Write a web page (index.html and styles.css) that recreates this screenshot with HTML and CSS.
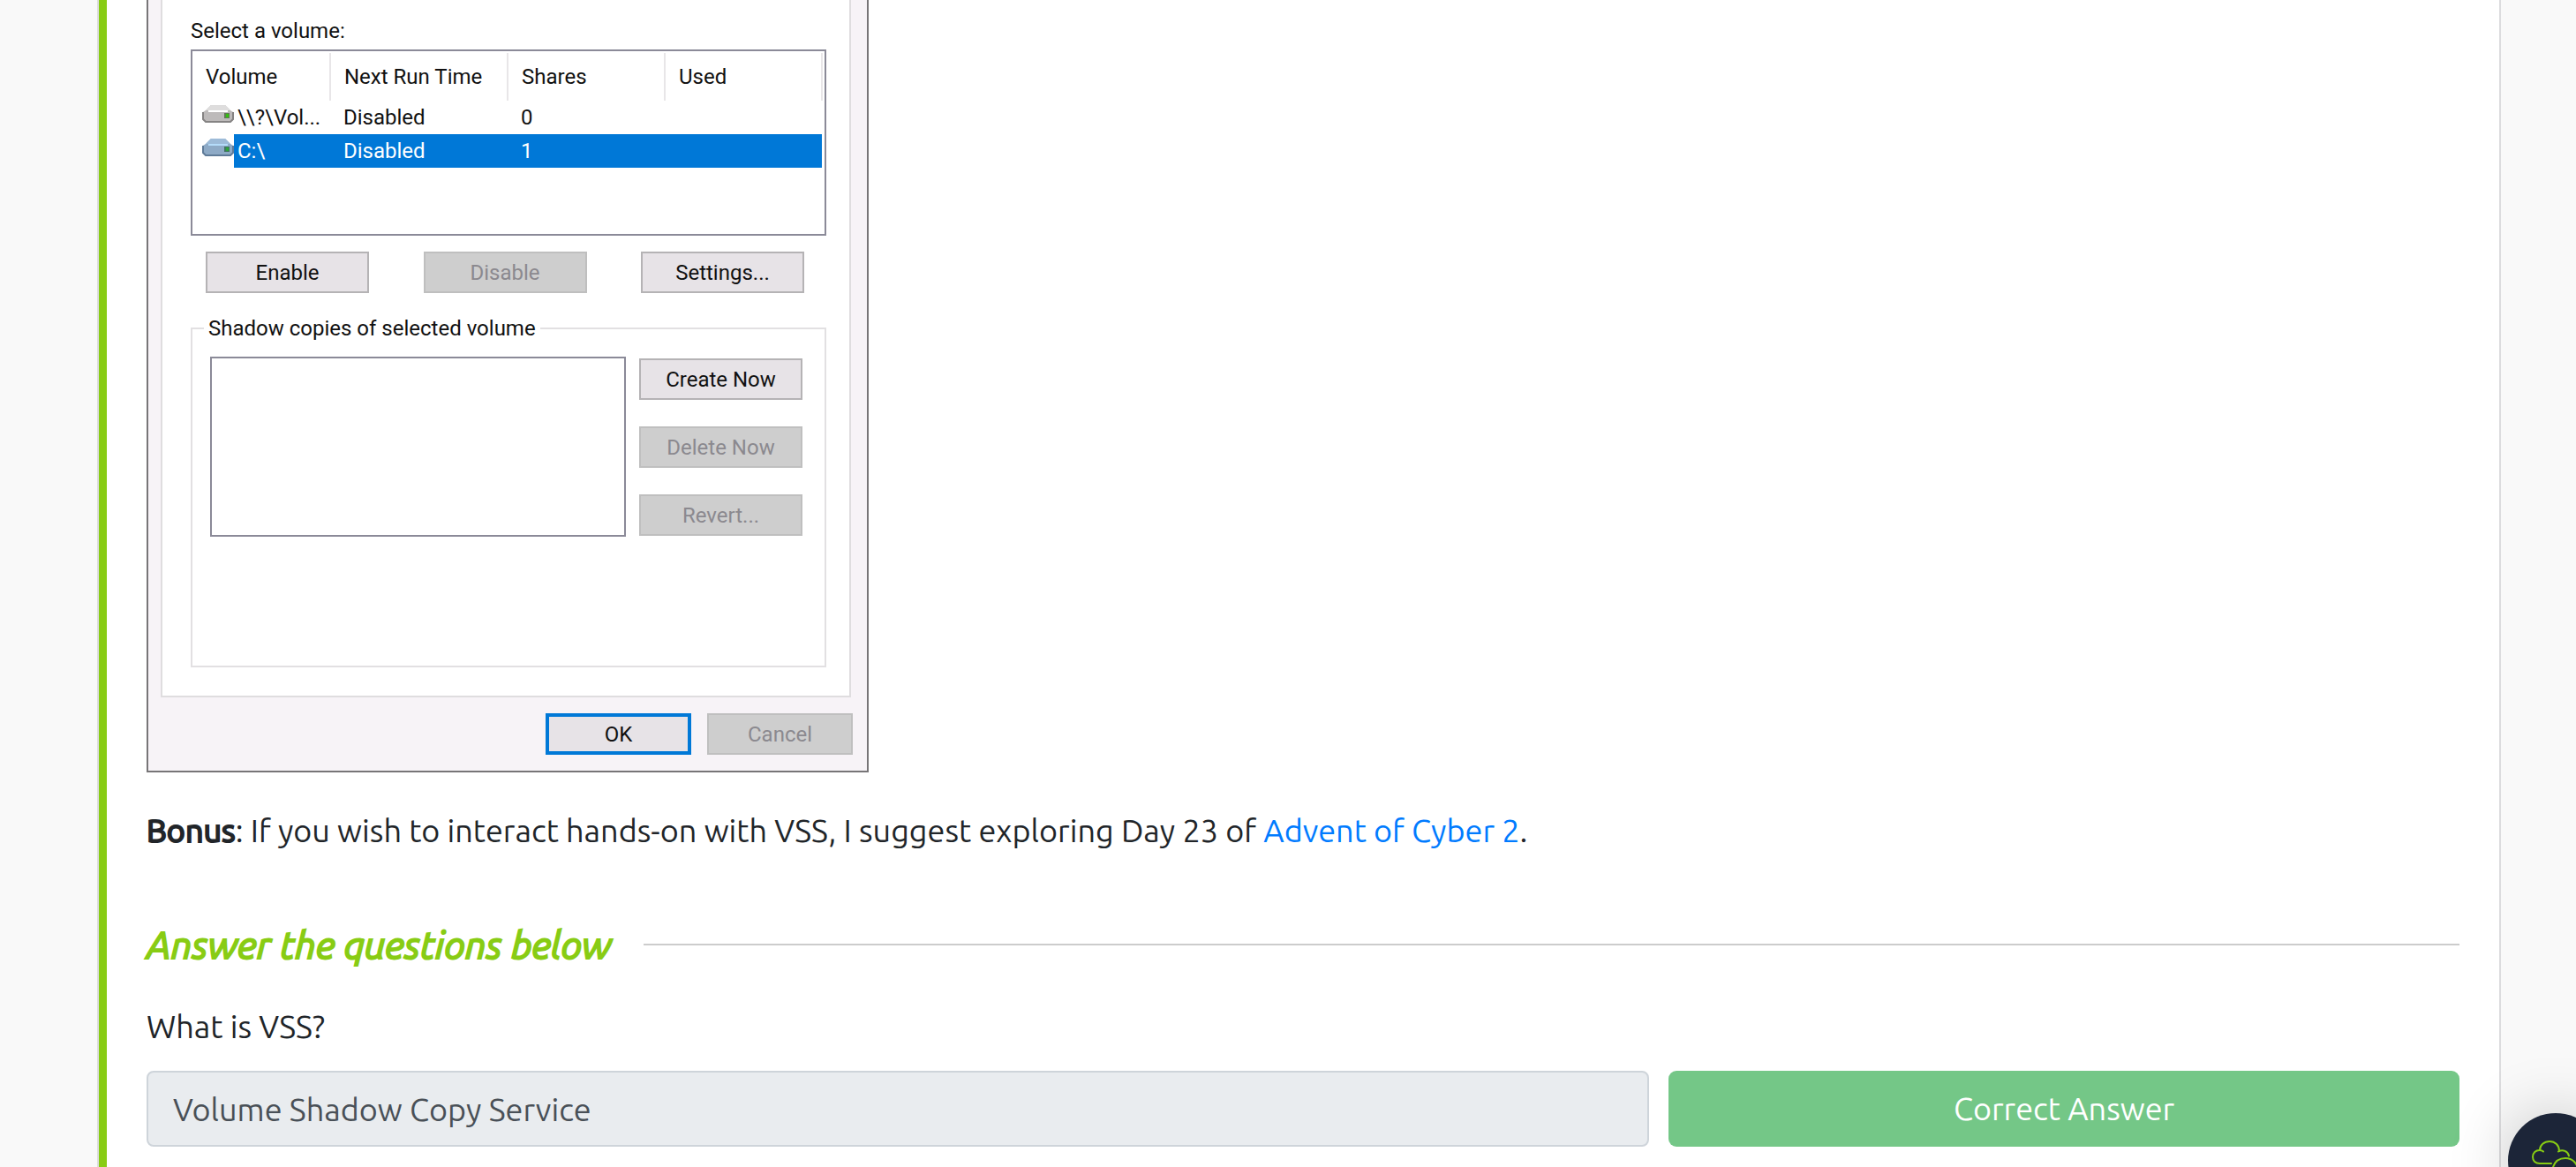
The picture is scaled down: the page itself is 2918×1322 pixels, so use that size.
FILE: index.html
```
<!DOCTYPE html>
<html lang="en">
<head>
<meta charset="utf-8">
<meta name="viewport" content="width=device-width, initial-scale=1">
<title>Volume Shadow Copy Service</title>
<link rel="stylesheet" href="styles.css">
</head>
<body>
<main class="task">
  <section class="dialog" aria-label="Shadow Copies">
    <div class="panel">
      <p class="panel-label">Select a volume:</p>
      <div class="volume-list">
        <table class="volumes">
          <colgroup><col class="col-volume"><col class="col-time"><col class="col-num"><col class="col-num"></colgroup>
          <thead>
            <tr><th>Volume</th><th>Next Run Time</th><th>Shares</th><th>Used</th></tr>
          </thead>
          <tbody>
            <tr>
              <td class="volume-cell"><div class="volume">
                <svg class="drive" viewBox="0 0 36 22" aria-hidden="true"><path d="M10 1h16l6 6 3 2v8l-3 3H4l-3-3V9l3-2z" fill="#bdbaba"/><path d="M10 1h16l6 6H4z" fill="#dedddd"/><path d="M7 7h22v2H7z" fill="#fff"/><path d="M1 9v8l3 3h28l3-3V9" fill="none" stroke="#858383" stroke-width="2"/><path d="M25 10h6v6h-6z" fill="#5d7a52"/><path d="M27 11h3v4h-3z" fill="#35c010"/></svg>
                <span class="volume-name">\\?\Vol...</span></div></td>
              <td>Disabled</td><td>0</td><td></td>
            </tr>
            <tr class="selected">
              <td class="volume-cell"><div class="volume">
                <svg class="drive" viewBox="0 0 36 22" aria-hidden="true"><path d="M10 1h16l6 6 3 2v8l-3 3H4l-3-3V9l3-2z" fill="#8eaac6"/><path d="M10 1h16l6 6H4z" fill="#9dbbd8"/><path d="M7 7h22v2H7z" fill="#b5dcfa"/><path d="M1 9v8l3 3h28l3-3V9" fill="none" stroke="#5f7b98" stroke-width="2"/><path d="M25 10h6v6h-6z" fill="#3f7560"/><path d="M27 11h3v4h-3z" fill="#2da43a"/></svg>
                <span class="volume-name">C:\</span></div></td>
              <td>Disabled</td><td>1</td><td></td>
            </tr>
          </tbody>
        </table>
      </div>
      <div class="volume-actions">
        <button class="win-button" type="button">Enable</button>
        <button class="win-button" type="button" disabled>Disable</button>
        <button class="win-button" type="button">Settings...</button>
      </div>
      <fieldset class="copies">
        <legend>Shadow copies of selected volume</legend>
        <div class="copies-body">
          <div class="copies-list"></div>
          <div class="copies-actions">
            <button class="win-button" type="button">Create Now</button>
            <button class="win-button" type="button" disabled>Delete Now</button>
            <button class="win-button" type="button" disabled>Revert...</button>
          </div>
        </div>
      </fieldset>
    </div>
    <div class="dialog-footer">
      <button class="win-button default" type="button">OK</button>
      <button class="win-button" type="button" disabled>Cancel</button>
    </div>
  </section>

  <p class="bonus"><strong>Bonus</strong>: If you wish to interact hands-on with VSS, I suggest exploring Day 23 of <a href="#advent-of-cyber-2">Advent of Cyber 2</a>.</p>

  <h2 class="questions-title">Answer the questions below</h2>

  <form class="question">
    <label class="question-text" for="answer">What is VSS?</label>
    <div class="answer-row">
      <input class="answer" id="answer" type="text" value="Volume Shadow Copy Service" disabled>
      <button class="correct" type="button" disabled>Correct Answer</button>
    </div>
  </form>
</main>

<button class="cloud-button" type="button" aria-label="Open machines">
  <svg class="cloud" viewBox="0 0 56 44" fill="none" stroke="#88cc14" stroke-width="2" stroke-linecap="round" aria-hidden="true">
    <path d="M22 26H9C4 26 1 23 1 18.500C1 14 4.500 11 8.500 11C10.500 11 12 11.500 13 12.500"/>
    <path d="M9 11C9 5 14 1 20 1C26.500 1 31 5.500 31 12"/>
    <path d="M30 12.500C35 9.500 41 12 42 17.500"/>
    <path d="M29 43C24 41 22 36 24 30C26 24 31 20 38 20C46 20 52 26 52 34"/>
  </svg>
</button>
</body>
</html>
```
FILE: styles.css
```
* {
  box-sizing: border-box;
}

body {
  margin: 0;
  min-height: 100vh;
  display: flex;
  overflow: hidden;
  background: #f9f9f9;
  color: #212529;
  font-family: Ubuntu, "Noto Sans", sans-serif;
  font-size: 36px;
  line-height: 54px;
}

p,
h2 {
  margin: 0;
}

button,
input {
  font: inherit;
}

.task {
  flex: 1;
  min-width: 0;
  margin: 0 85px 0 110px;
  padding: 0 45px 0 54px;
  background: linear-gradient(to right, #88cc14 9px, #fff 9px);
  border: solid #dcdcde;
  border-width: 0 2px;
}

/* Shadow Copies dialog */

.dialog {
  width: 818px;
  max-width: 100%;
  padding: 0 16px 18px 14px;
  border: solid #777577;
  border-width: 0 2px 2px;
  background: #f7f3f7;
  color: #111;
  font-family: Roboto, sans-serif;
  font-size: 24px;
  line-height: 30px;
}

.panel {
  margin-right: 2px;
  padding: 20px 26px 32px 32px;
  border: solid #dfdddf;
  border-width: 0 2px 2px;
  background: #fff;
}

.volume-list {
  height: 211px;
  margin-top: 6px;
  padding: 2px 2px 0 0;
  border: 2px solid #8b8a98;
}

.volumes {
  width: 100%;
  table-layout: fixed;
  border-collapse: collapse;
}

.col-volume {
  width: 156px;
}

.col-time {
  width: 201px;
}

.volumes th {
  height: 54px;
  padding: 0 0 0 15px;
  border-right: 2px solid #e8e6e8;
  font-weight: 400;
  text-align: left;
  white-space: nowrap;
}

.volumes td {
  height: 38px;
  padding: 0 0 0 15px;
}

.volumes .volume-cell {
  padding-left: 11px;
}

.volume {
  display: flex;
  height: 38px;
}

.drive {
  width: 36px;
  height: 22px;
  margin-top: 4px;
}

.volume-name {
  flex: 1;
  padding-left: 4px;
  line-height: 38px;
}

.selected td:not(.volume-cell),
.selected .volume-name {
  background: #0078d7;
  color: #fff;
}

.win-button {
  width: 185px;
  height: 47px;
  padding: 0;
  border: 2px solid #b5b3b5;
  border-radius: 0;
  background: #e7e3e7;
  color: #111;
}

.win-button:disabled {
  border-color: #bfbfbf;
  background: #cecece;
  color: #8b898f;
}

.volume-actions {
  display: flex;
  justify-content: space-between;
  margin-top: 18px;
  padding: 0 25px 0 17px;
}

.copies {
  margin: 25px 0 0;
  padding: 17px 25px 146px 20px;
  border: 2px solid #e2e0e2;
}

.copies legend {
  margin-left: -7px;
  padding: 0 5px;
}

.copies-body {
  display: flex;
  gap: 15px;
}

.copies-list {
  flex: 1;
  height: 204px;
  border: 2px solid #8b8a98;
}

.copies-actions {
  display: flex;
  flex-direction: column;
  gap: 30px;
  padding-top: 2px;
}

.dialog-footer {
  display: flex;
  justify-content: flex-end;
  gap: 18px;
  margin-top: 18px;
}

.dialog-footer .win-button {
  width: 165px;
}

.dialog-footer .default {
  border: 4px solid #0078d7;
}

/* Task text and questions */

.bonus {
  margin-top: 39px;
}

.bonus strong {
  font-weight: 400;
  -webkit-text-stroke: 2px;
}

.bonus a {
  color: #007bff;
  text-decoration: none;
}

.questions-title {
  display: flex;
  align-items: center;
  gap: 36px;
  margin-top: 78px;
  color: #88cc14;
  font-size: 43px;
  font-style: italic;
  font-weight: 400;
  line-height: 48px;
  -webkit-text-stroke: 2px;
}

.questions-title::after {
  content: "";
  flex: 1;
  height: 2px;
  background: #ccc;
}

.question {
  margin-top: 42px;
}

.question-text {
  display: block;
}

.answer-row {
  display: grid;
  grid-template-columns: 19fr 10fr;
  gap: 22px;
  margin-top: 23px;
}

.answer {
  min-width: 0;
  height: 86px;
  padding: 0 28px;
  border: 2px solid #ced4da;
  border-radius: 8px;
  background: #e9ecef;
  color: #495057;
}

.correct {
  height: 86px;
  padding: 0;
  border: 0;
  border-radius: 9px;
  background: #74c787;
  color: #fff;
}

/* Floating machine launcher, partly past the window corner */

.cloud-button {
  position: fixed;
  right: -31px;
  bottom: -47px;
  width: 108px;
  height: 108px;
  padding: 31px 0 33px 27px;
  border: 0;
  border-radius: 50%;
  background: #1c2538;
  box-shadow: 0 0 72px rgba(0, 0, 0, 0.2);
  text-align: left;
}

.cloud {
  display: block;
  width: 56px;
  height: 44px;
}
```
